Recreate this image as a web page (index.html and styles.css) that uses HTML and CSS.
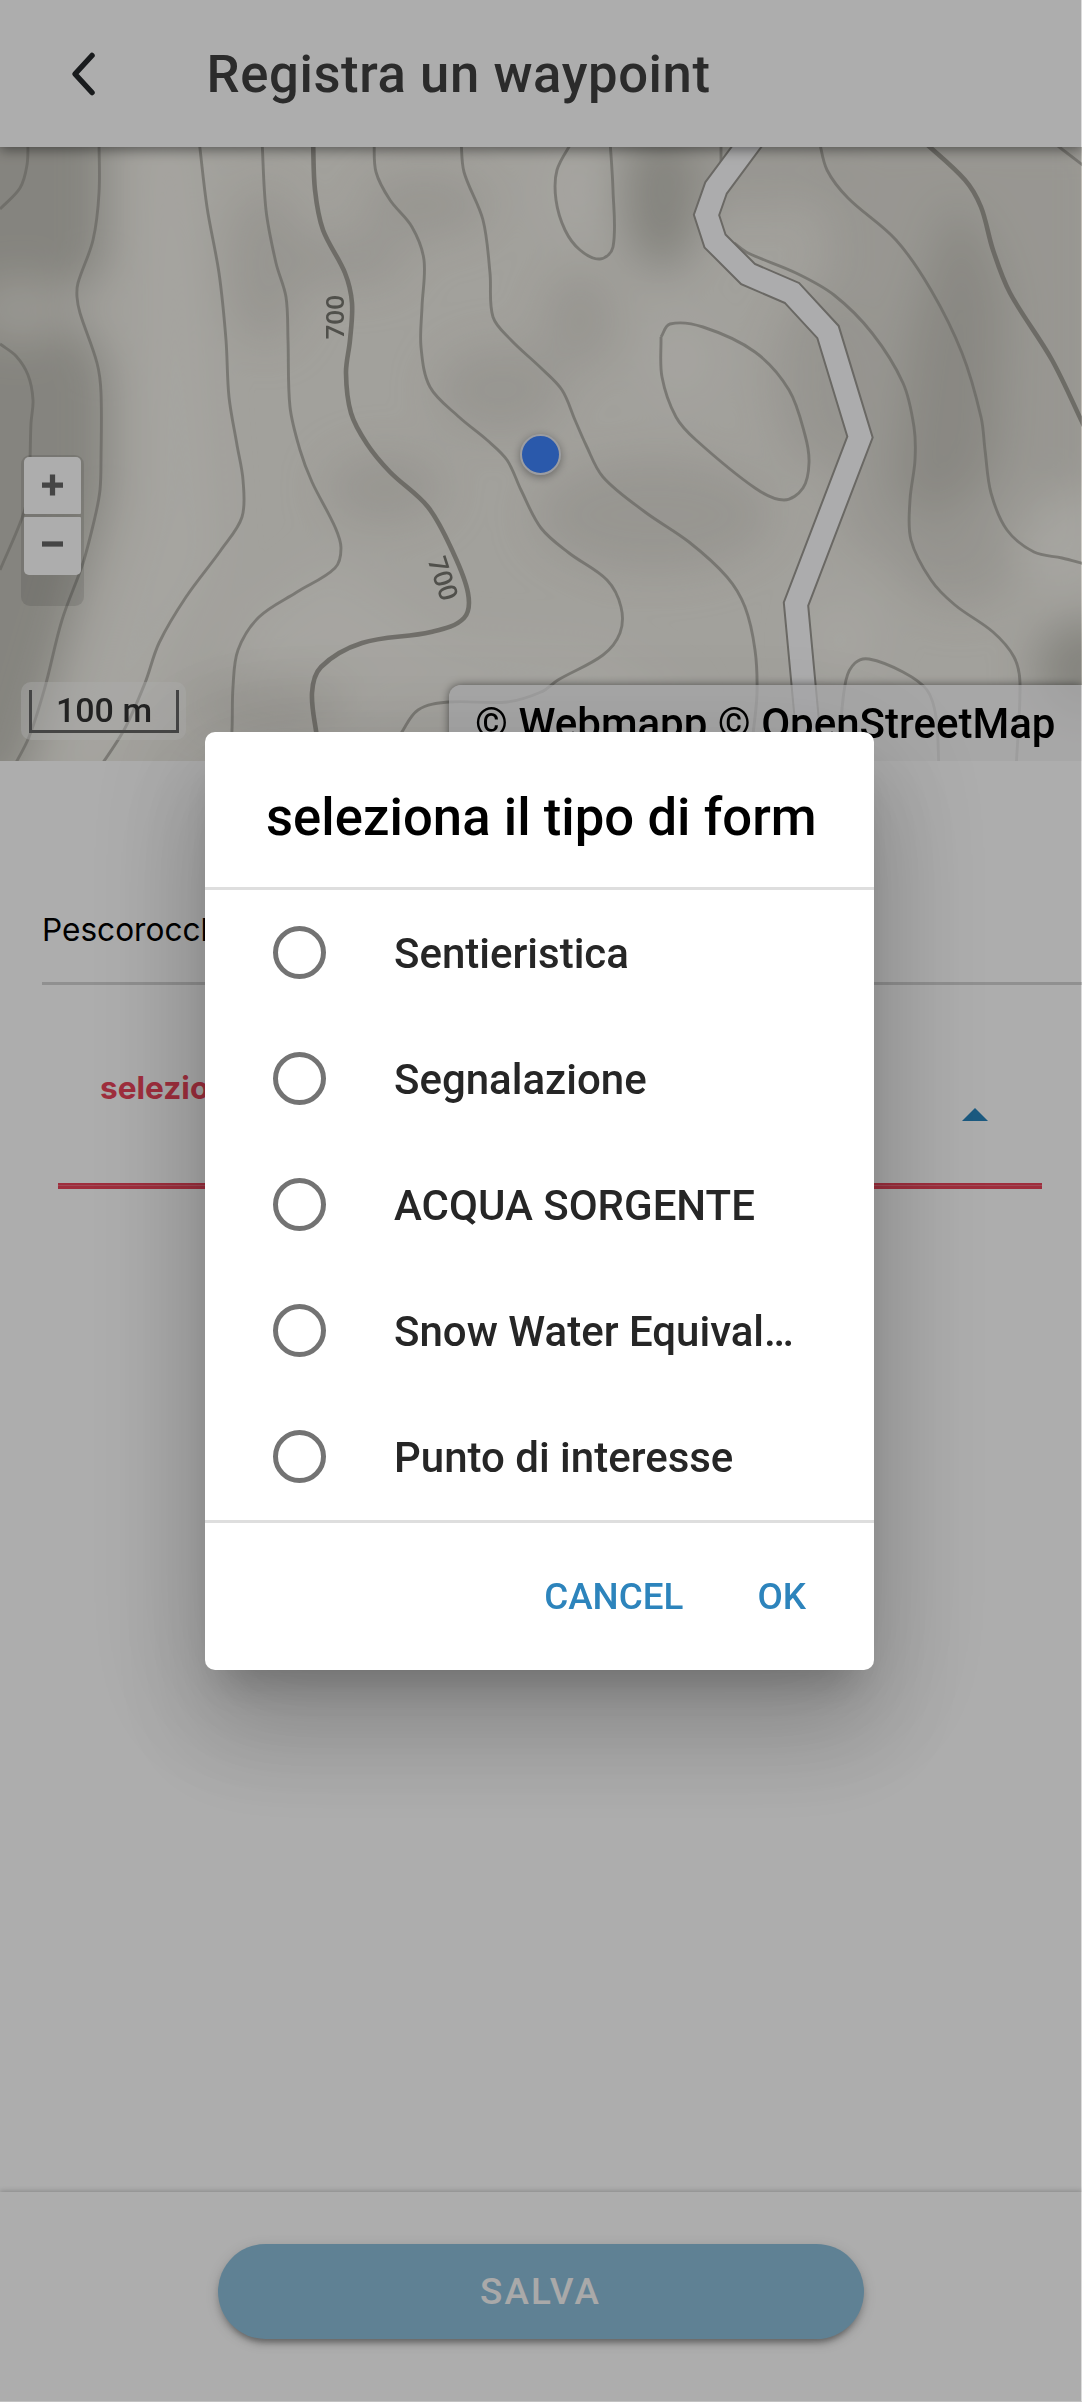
FILE: index.html
```
<!DOCTYPE html>
<html lang="it">
<head>
<meta charset="utf-8">
<title>Registra un waypoint</title>
<link rel="stylesheet" href="styles.css">
</head>
<body>
<div class="page">
  <header class="toolbar">
    <svg class="back" viewBox="0 0 30 48" aria-hidden="true"><path d="M24 5.500 7 24 24 42.500"/></svg>
    <h1 class="toolbar-title">Registra un waypoint</h1>
  </header>

  <section class="map">
    <svg class="map-canvas" viewBox="0 147 1082 614" preserveAspectRatio="none" aria-hidden="true">
      <defs>
        <filter id="soft" x="-60%" y="-60%" width="220%" height="220%"><feGaussianBlur stdDeviation="22"/></filter>
      </defs>
      <rect x="0" y="147" width="1082" height="614" fill="#efede6"/>
      <g filter="url(#soft)">
        <path class="shade-dark" d="M-60 100H105V265L65 300 108 370V490L65 640 20 790H-60Z"/>
        <ellipse class="shade-light" cx="22" cy="310" rx="50" ry="30"/>
        <path class="shade-light" d="M150 130H185L215 560 90 790H60L150 520Z"/>
        <path class="shade-light" d="M250 620 330 560 450 640 600 650 700 700 500 700 330 740 240 680Z"/>
        <ellipse class="shade-mid" cx="265" cy="265" rx="40" ry="80"/>
        <ellipse class="shade-mid" cx="425" cy="205" rx="65" ry="34"/>
        <ellipse class="shade-mid" cx="350" cy="260" rx="60" ry="26"/>
        <ellipse class="shade-mid" cx="500" cy="390" rx="65" ry="45"/>
        <ellipse class="shade-mid" cx="385" cy="488" rx="60" ry="36"/>
        <ellipse class="shade-mid" cx="655" cy="515" rx="120" ry="58"/>
        <ellipse class="shade-mid" cx="580" cy="320" rx="38" ry="50"/>
        <ellipse class="shade-dark" cx="662" cy="195" rx="40" ry="75"/>
        <ellipse class="shade-mid" cx="760" cy="170" rx="80" ry="40"/>
        <ellipse class="shade-mid" cx="815" cy="380" rx="45" ry="90"/>
        <path class="shade-dark" d="M950 200 985 240 1005 300 1000 450 975 500 920 520 890 490 910 330Z"/>
        <path class="shade-mid" d="M820 130 1102 130V480L1020 540 900 570 840 540Z"/>
        <ellipse class="shade-mid" cx="960" cy="570" rx="60" ry="40"/>
        <ellipse class="shade-dark" cx="1085" cy="670" rx="50" ry="50"/>
        <ellipse class="shade-mid" cx="270" cy="705" rx="80" ry="28"/>
        <ellipse class="shade-light" cx="1060" cy="540" rx="40" ry="50"/>
        <ellipse class="shade-light" cx="680" cy="360" rx="28" ry="36"/>
        <ellipse class="shade-light" cx="575" cy="190" rx="24" ry="50"/>
        <ellipse class="shade-light" cx="840" cy="640" rx="34" ry="40"/>
      </g>
      <g id="contours"></g>
      <path class="road-edge" d="M756 134 716 188 706.500 215 715 241 748 274 792 293 828 332 860 437 796 604 812 775"/>
      <path class="road" d="M756 134 716 188 706.500 215 715 241 748 274 792 293 828 332 860 437 796 604 812 775"/>
      <text class="contour-label" transform="translate(343.500 339.500) rotate(-90)">700</text>
      <text class="contour-label" transform="translate(427.500 560) rotate(72)">700</text>
    </svg>
    <div class="position-dot"></div>
    <div class="map-side">
      <div class="zoom-control">
        <button class="zoom-button" type="button" aria-label="+"><svg viewBox="0 0 22 22"><path d="M0 11H22M11 0V22"/></svg></button>
        <button class="zoom-button" type="button" aria-label="-"><svg viewBox="0 0 22 22"><path d="M0 11H22"/></svg></button>
      </div>
      <div class="scale"><div class="scale-bar">100 m</div></div>
    </div>
    <div class="attribution">© Webmapp © OpenStreetMap</div>
  </section>

  <main class="form">
    <div class="location">Pescorocchiano</div>
    <div class="type-field">
      <span class="type-label">seleziona il tipo di form</span>
      <span class="caret"></span>
    </div>
  </main>

  <footer class="footer"><button class="save" type="button">SALVA</button></footer>
</div>

<div class="backdrop">
  <div class="dialog" role="dialog">
    <h2 class="dialog-title">seleziona il tipo di form</h2>
    <div class="options">
      <label class="option"><span class="radio"></span><span class="option-text">Sentieristica</span></label>
      <label class="option"><span class="radio"></span><span class="option-text">Segnalazione</span></label>
      <label class="option"><span class="radio"></span><span class="option-text">ACQUA SORGENTE</span></label>
      <label class="option"><span class="radio"></span><span class="option-text">Snow Water Equivalent</span></label>
      <label class="option"><span class="radio"></span><span class="option-text">Punto di interesse</span></label>
    </div>
    <div class="actions"><span>CANCEL</span><span>OK</span></div>
  </div>
</div>
<script src="map.js"></script>
</body>
</html>
```
FILE: map.js
```
// Contour lines as point lists; each is smoothed with a Catmull-Rom spline.
const contours = [
  { p: "28,140 27,165 20,188 0,209" },
  { p: "99,140 99,193 93,240 78,283 77,297 80,313 97,363 101,393 101,460 100,490 95,517 83,563 62,620 45,687 29,737 12,770" },
  { p: "0,344 16,356 28,375 33,400 31,423 30,460 29,490 22,518 0,570" },
  { p: "199,140 207,207 219,273 226,340 229,397 237,445 243,480 242,517 221,550 186,597 159,643 145,683 124,730 98,770" },
  { p: "262,140 266,210 276,263 286,297 288,340 290,407 300,450 312,482 335,527 341,548 335,568 297,592 259,617 238,650 233,687 232,730 229,770" },
  { bold: true, p: "313,140 315,190 323,230 345,273 352,303 350,340 346,373 351,413 367,444 390,472 428,507 452,550 468,593 464,618 431,632 362,643 321,667 312,693 317,738" },
  { p: "374,140 376,172 390,200 412,227 424,260 422,307 421,347 430,387 459,417 487,440 507,460 521,490 541,528 569,553 607,580 621,607 620,633 603,655 558,680 541,692 507,702 449,702 418,710 400,735" },
  { p: "461,140 464,172 483,220 490,273 493,317 511,340 541,368 562,390 575,420 586,445 603,477 645,512 689,542 727,577 745,607 755,650 757,693 753,735" },
  { p: "573,140 557,170 556,200 565,230 580,250 600,259 613,247 613,190 610,140" },
  { p: "661,337 670,324 703,327 755,352 789,390 805,435 809,463 803,488 784,500 755,488 696,440 676,417 662,377 661,337" },
  { p: "721,140 721,162" },
  { p: "734,243 748,253 796,273 834,295 872,333 903,383 914,427 915,460 910,500 911,540 931,580 955,605 993,632 1014,657 1020,683 1016,770" },
  { p: "819,140 827,170 848,198 896,240 931,290 962,353 981,417 985,450 991,493 1007,530 1034,552 1062,558 1085,564" },
  { bold: true, p: "922,140 965,180 981,207 993,250 1010,293 1052,360 1084,426" },
  { p: "1050,140 1084,166" },
  { p: "840,730 846,680 855,663 869,659 903,672 927,690 936,717 939,770" }
];

function smooth(text) {
  const pts = text.split(" ").map(s => s.split(",").map(Number));
  let d = "M" + pts[0];
  for (let i = 0; i < pts.length - 1; i++) {
    const a = pts[i - 1] || pts[i], b = pts[i], c = pts[i + 1], e = pts[i + 2] || c;
    const span = Math.hypot(c[0] - b[0], c[1] - b[1]);
    const t1 = span / (Math.hypot(c[0] - a[0], c[1] - a[1]) * 3 || 1);
    const t2 = span / (Math.hypot(e[0] - b[0], e[1] - b[1]) * 3 || 1);
    d += "C" + [
      b[0] + (c[0] - a[0]) * t1, b[1] + (c[1] - a[1]) * t1,
      c[0] - (e[0] - b[0]) * t2, c[1] - (e[1] - b[1]) * t2, c[0], c[1]
    ].map(n => n.toFixed(1)).join(" ");
  }
  return d;
}

const group = document.getElementById("contours");
for (const line of contours) {
  const path = document.createElementNS("http://www.w3.org/2000/svg", "path");
  path.setAttribute("d", smooth(line.p));
  path.setAttribute("class", line.bold ? "contour contour-bold" : "contour");
  group.appendChild(path);
}
```
FILE: styles.css
```
* { box-sizing: border-box; }
html, body { margin: 0; height: 2402px; overflow: hidden; }
body { font-family: Roboto, "Liberation Sans", sans-serif; background: #fff; }
button { font: inherit; border: 0; padding: 0; }

.page { display: flex; flex-direction: column; height: 2402px; }

.toolbar {
  display: flex; align-items: center; height: 147px; flex: none;
  padding-left: 68px; background: #fff; position: relative; z-index: 1;
  box-shadow: 0 3px 12px rgba(0,0,0,.45);
}
.back { width: 30px; height: 48px; flex: none; }
.back path { fill: none; stroke: #26292b; stroke-width: 5.5; stroke-linecap: round; stroke-linejoin: round; }
.toolbar-title {
  margin: 0 0 0 108.500px; font-size: 52.6px; font-weight: 500; line-height: 62px;
  letter-spacing: .6px; color: #404040; white-space: nowrap;
}

.map { position: relative; height: 614px; flex: none; overflow: hidden; }
.map-canvas { position: absolute; inset: 0; width: 100%; height: 100%; }
.shade-dark { fill: #b9b7ae; opacity: .78; }
.shade-mid { fill: #d2d0c8; opacity: .5; }
.shade-light { fill: #fbfaf3; opacity: .55; }
.contour { fill: none; stroke: #97958d; stroke-opacity: .68; stroke-width: 2.9; }
.contour-bold { stroke-width: 4.6; stroke: #918f87; stroke-opacity: .8; }
.road-edge { fill: none; stroke: #9c9a94; stroke-width: 26; stroke-linejoin: miter; }
.road { fill: none; stroke: #fefeff; stroke-width: 22; stroke-linejoin: miter; }
.contour-label { font: 600 26px "Open Sans", sans-serif; fill: #77766f; }
.position-dot {
  position: absolute; left: 520px; top: 287px; width: 41px; height: 41px; border-radius: 50%;
  background: #3e83fd; border: 2.500px solid #e6e8ee; box-shadow: 0 2px 9px rgba(0,0,0,.35);
}
.map-side {
  position: absolute; left: 21px; top: 308px; height: 285px;
  display: flex; flex-direction: column; justify-content: space-between; align-items: flex-start;
}
.zoom-control {
  width: 63px; height: 151px; padding: 2px 3px 0 3px; display: flex; flex-direction: column;
  gap: 3px; background: rgba(0,0,0,.1); border-radius: 9px;
}
.zoom-button {
  width: 57px; height: 57px; padding-bottom: 2px; background: #fff; display: grid; place-items: center;
  border-radius: 5px 5px 1px 1px;
}
.zoom-button + .zoom-button { height: 58px; padding-bottom: 4px; border-radius: 1px 1px 5px 5px; }
.zoom-button svg { width: 21px; height: 22px; }
.zoom-button path { stroke: #666; stroke-width: 5.5; }
.scale { width: 165px; height: 58px; padding: 8px 7px 7px 8px; background: rgba(255,255,255,.4); border-radius: 10px; }
.scale-bar {
  height: 43px; border: solid #666; border-width: 0 3px 3px; text-align: center;
  font-size: 34px; font-weight: 500; line-height: 40px; color: #333;
}
.attribution {
  position: absolute; right: 0; bottom: -2px; height: 78px; width: 633px;
  padding-left: 26px; line-height: 77px; font-size: 42px; font-weight: 500; white-space: nowrap;
  color: #000; background: rgba(250,250,252,.75); border-radius: 12px 0 0 0;
  box-shadow: 0 0 9px rgba(0,0,0,.5);
}

.form { flex: 1; font-family: Inter, sans-serif; }
.location {
  margin-left: 42px; height: 224px; padding-top: 145px; border-bottom: 3px solid #d4d4d4;
  font-size: 31.6px; line-height: 48px; color: #000;
}
.type-field {
  margin: 0 40px 0 58px; height: 204px; padding: 83px 54px 0 42px;
  background: linear-gradient(#eb445a 0 2px, #eb6f80 2px 3px, #eb445a 3px) bottom / 100% 6px no-repeat;
  display: flex; justify-content: space-between;
}
.type-label { font-size: 31.6px; font-weight: 700; line-height: 40px; color: #eb445a; }
.caret { width: 26px; height: 13px; margin-top: 40px; background: #2884bc; clip-path: polygon(50% 0, 100% 100%, 0 100%); }

.footer {
  height: 210px; flex: none; display: flex; justify-content: center; align-items: flex-start;
  padding: 52px 1px 0 0; box-shadow: 0 -1px 5px rgba(0,0,0,.22);
}
.save {
  width: 646px; height: 95px; border-radius: 48px; background: #8cbfdb; color: #fafafa;
  font-size: 36.8px; font-weight: 500; letter-spacing: 2.200px;
  box-shadow: 0 8px 4px -5px rgba(0,0,0,.2), 0 5px 6px rgba(0,0,0,.16), 0 3px 14px rgba(0,0,0,.14);
}

.backdrop {
  position: fixed; inset: 0; z-index: 10; display: flex; justify-content: center; align-items: center;
  padding-right: 2px; background: rgba(0,0,0,.32); background-clip: padding-box;
  border-right: 1px solid rgba(0,0,0,.14); border-bottom: 1px solid rgba(0,0,0,.24);
}
.dialog {
  width: 669px; height: 938px; background: #fff; border-radius: 10px; overflow: hidden;
  display: flex; flex-direction: column;
  box-shadow: 0 29px 39px -18px rgba(0,0,0,.2), 0 63px 100px 8px rgba(0,0,0,.14), 0 24px 121px 21px rgba(0,0,0,.12);
}
.dialog-title {
  margin: 0; height: 155px; padding: 54px 0 0 61px; line-height: 62px; white-space: nowrap;
  font-size: 52.6px; font-weight: 500; letter-spacing: .05px; color: #000;
}
.options { height: 636px; border: solid #dedede; border-width: 3px 0; }
.option { display: flex; align-items: center; height: 126px; padding: 0 68px; }
.radio { width: 53px; height: 53px; border: 5.300px solid #737373; border-radius: 50%; flex: none; }
.option-text {
  margin-left: 68px; padding-top: 2px; width: 402px; font-size: 42px; font-weight: 500; line-height: 50px;
  color: #262626; white-space: nowrap; overflow: hidden; text-overflow: ellipsis;
}
.actions {
  height: 147px; display: flex; justify-content: flex-end; gap: 74px; padding: 52px 68px 0 0;
  font-size: 36.8px; font-weight: 500; line-height: 44px; color: #2d84bc;
}
```
